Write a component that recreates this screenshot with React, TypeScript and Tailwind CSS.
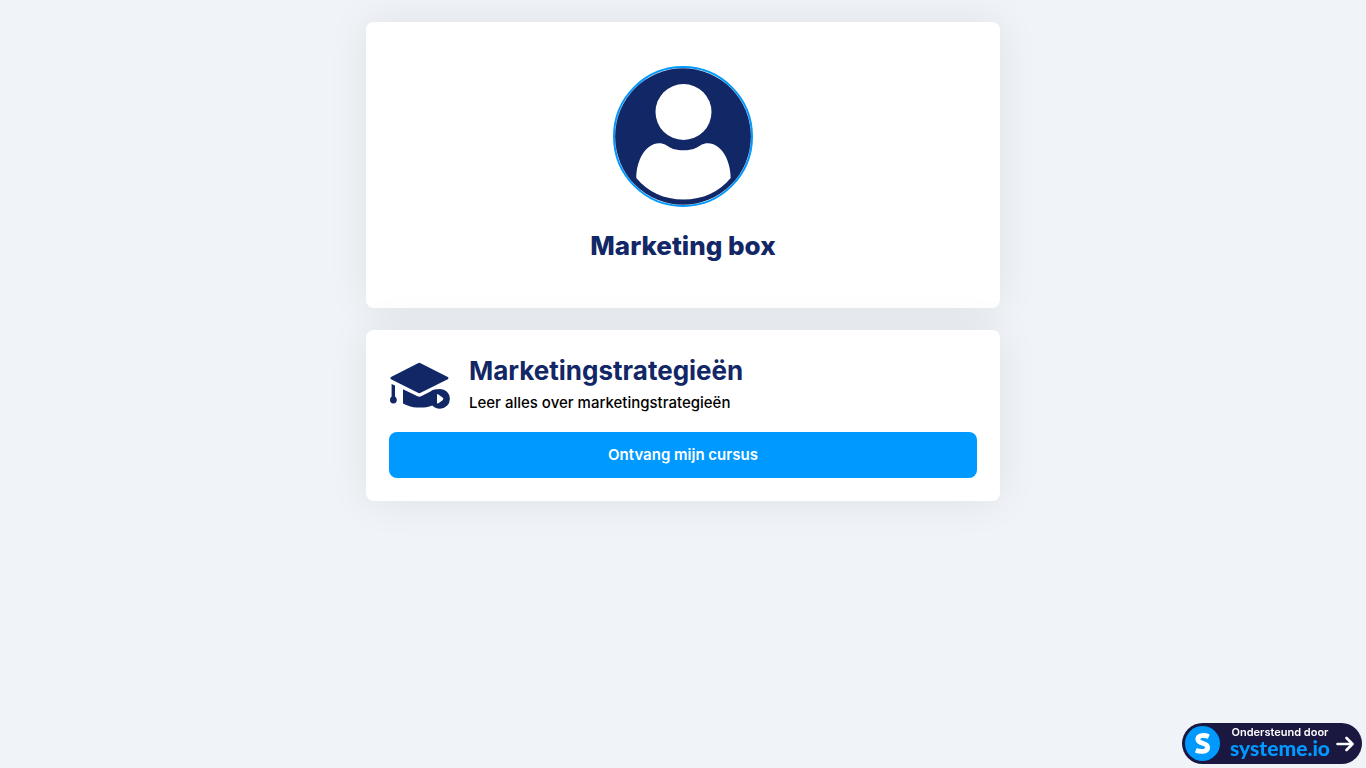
const Avatar = () => {
    return (
        <svg className="w-[140px] h-[141px]" viewBox="0 0 140 141" role="img" aria-label="Avatar">
            <ellipse cx="70" cy="70.5" rx="69" ry="69.5" fill="#fff" stroke="#0099ff" strokeWidth="2" />
            <ellipse cx="70" cy="70.5" rx="67.9" ry="68.3" fill="#122765" />
            <circle cx="70.5" cy="46" r="28" fill="#fff" />
            <path
                d="M23.3 112C23.3 94 33 77.3 46 77.3C55 77.3 55 84.3 70.5 84.3C86 84.3 86 77.3 95 77.3C108 77.3 117.7 94 117.7 112C106 126 90 133.5 70.5 133.5C51 133.5 35 126 23.3 112Z"
                fill="#fff"
            />
        </svg>
    );
};

const CourseIcon = () => {
    return (
        <svg className="w-[61px] h-[60px] shrink-0" viewBox="-1 -1 61 60" fill="#122765" aria-hidden="true">
            <path d="M28 9.2Q29.3 8.5 30.6 9.2L57.8 23Q59.4 24.1 57.8 25.2L30.6 38.8Q29.3 39.5 28 38.8L1 25.2Q-.4 24.1 1 23Z" />
            <path d="M1.6 30L5 31.4V42.5C6.2 43.4 6.8 44.6 6.8 46A3.4 3.4 0 0 1 0 46C0 44.6 .6 43.4 1.6 42.5Z" />
            <path
                fillRule="evenodd"
                d="M13 35.2L27.5 42.2Q29.3 43.1 31.1 42.2L40.5 37.5C42.5 35.5 46 34.9 50 34.9A9.9 9.9 0 0 1 50 54.7C46.5 54.7 44 53.5 42.3 51.5C37 53.6 32.5 53.8 27 53.5C22 53.2 17 51.8 13 49.4ZM47 41V48.4Q47 49.9 48.4 49.2L52.6 46.2Q54.2 44.8 52.6 43.5L48.4 40.4Q47 39.6 47 41Z"
            />
        </svg>
    );
};

const PoweredBadge = () => {
    return (
        <a
            href="#systeme"
            className="fixed right-1 bottom-1 flex h-[41px] w-[180px] items-center rounded-full bg-[#1a1740] pl-[3px] pr-2"
        >
            <svg className="w-[35px] h-[35px] shrink-0" viewBox="0 0 35 35" aria-hidden="true">
                <circle cx="17.5" cy="17.5" r="17.5" fill="#0099ff" />
                <path
                    d="M23.8 10.6C19.5 8.8 12.8 9 12.8 13.2C12.8 18.4 22.6 16.2 22.6 21.4C22.6 26 15.5 26.2 10.8 24.2"
                    fill="none"
                    stroke="#fff"
                    strokeWidth="4.8"
                />
            </svg>
            <span className="flex flex-1 flex-col items-center pb-1 pl-1">
                <span className="text-[11px] leading-3 font-semibold text-white">Ondersteund door</span>
                <span className="font-['Lato'] text-[21px] leading-5 font-black text-[#0099ff]">systeme.io</span>
            </span>
            <svg
                className="w-[18px] h-[18px] shrink-0"
                viewBox="0 0 18 18"
                fill="none"
                stroke="#fff"
                strokeWidth="2.6"
                strokeLinecap="round"
                strokeLinejoin="round"
                aria-hidden="true"
            >
                <path d="M1.5 9H16M10.5 3L16.5 9L10.5 15" />
            </svg>
        </a>
    );
};

function App() {
    return (
        <div className="min-h-screen bg-[#f0f4f9] px-4 py-[22px] font-['Inter',sans-serif]">
            <main className="mx-auto flex max-w-[634px] flex-col gap-[22px]">
                <section className="flex flex-col items-center rounded-lg bg-white px-6 py-11 shadow-[0_0_40px_rgba(0,0,0,0.08)]">
                    <Avatar />
                    <h1 className="mt-[22px] mb-0.5 text-[26px] leading-[33px] font-extrabold text-[#122765]">Marketing box</h1>
                </section>

                <section className="rounded-lg bg-white p-[23px] shadow-[0_0_40px_rgba(0,0,0,0.08)]">
                    <div className="flex items-start gap-[19px]">
                        <CourseIcon />
                        <div>
                            <h2 className="text-[26px] leading-[35px] font-bold text-[#122765]">Marketingstrategieën</h2>
                            <p className="text-[15px] leading-[30px] font-medium text-black">Leer alles over marketingstrategieën</p>
                        </div>
                    </div>
                    <button
                        type="button"
                        className="mt-3.5 block h-[46px] w-full rounded-lg bg-[#0099ff] text-[15px] font-semibold text-white"
                    >
                        Ontvang mijn cursus
                    </button>
                </section>
            </main>
            <PoweredBadge />
        </div>
    );
}

export default App;
